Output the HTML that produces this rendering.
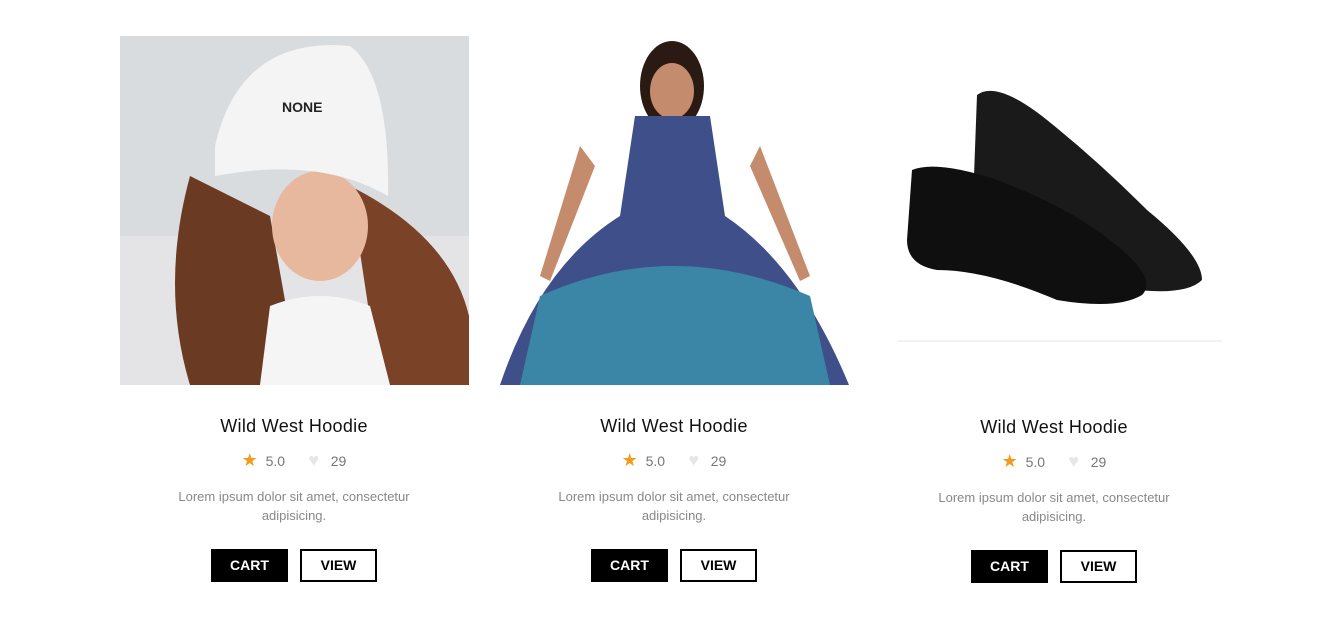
<!DOCTYPE html>
<html><head><style>
body{margin:0;width:1344px;height:621px;background:#fff;font-family:"Liberation Sans",sans-serif;position:relative;overflow:hidden}
.card{position:absolute;width:380px;text-align:center}
.t{position:absolute;top:0;left:0;width:100%;font-size:18px;color:#111;letter-spacing:.3px}
.r{position:absolute;top:34px;left:0;width:100%;font-size:14px;color:#777}
.d{position:absolute;top:71px;left:0;width:100%;font-size:13px;line-height:19px;color:#888}
.b{position:absolute;top:133px;width:77px;height:33px;box-sizing:border-box;font-size:14px;font-weight:bold;line-height:31px}
.c{left:107px;background:#000;color:#fff;border:1px solid #000}
.v{left:196px;border:2px solid #000;color:#000;line-height:29px}
</style></head><body>
<svg style="position:absolute;left:120px;top:36px" width="349" height="349">
<rect width="349" height="349" fill="#d9dcdf"/>
<rect x="0" y="200" width="349" height="149" fill="#e4e4e6"/>
<path d="M70 140 Q40 250 70 349 L180 349 L150 180 Z" fill="#6b3a22"/>
<path d="M230 150 Q330 200 349 280 L349 349 L260 349 Z" fill="#7a4328"/>
<ellipse cx="200" cy="190" rx="48" ry="55" fill="#e7b79e"/>
<path d="M150 270 Q200 250 250 270 L270 349 L140 349 Z" fill="#f5f5f5"/>
<path d="M95 110 Q120 0 230 10 Q270 40 268 160 Q200 120 95 140 Z" fill="#f4f4f4"/>
<text x="162" y="76" font-size="14" font-weight="bold" fill="#222">NONE</text>
</svg>
<svg style="position:absolute;left:500px;top:36px" width="349" height="349">
<rect width="349" height="349" fill="#fff"/>
<ellipse cx="172" cy="50" rx="32" ry="45" fill="#2b1a14"/>
<ellipse cx="172" cy="55" rx="22" ry="28" fill="#c48b6c"/>
<path d="M80 110 L40 240 L50 245 L95 130 Z M260 110 L310 240 L300 245 L250 130 Z" fill="#c48b6c"/>
<path d="M135 80 L210 80 L225 180 Q300 230 349 349 L0 349 Q40 230 120 180 Z" fill="#3e4f8a"/>
<path d="M40 260 Q172 200 310 260 L330 349 L20 349 Z" fill="#3b86a6"/>
</svg>
<svg style="position:absolute;left:897px;top:80px" width="325" height="262">
<path d="M80 15 Q100 0 150 40 Q200 80 250 130 Q305 175 305 200 Q290 215 240 210 L170 200 Q100 200 75 150 Z" fill="#1a1a1a"/>
<path d="M15 90 Q40 80 100 100 Q180 130 225 170 Q260 200 245 215 Q220 230 160 220 Q90 190 40 190 Q10 185 10 160 Z" fill="#0f0f0f"/>
<rect x="0" y="260" width="325" height="2" fill="#f2f2f2"/>
</svg>
<div class="card" style="left:104px;top:416px"><div class="t">Wild West Hoodie</div><div class="r"><span style="color:#f39a1b;font-size:18px">★</span>&nbsp;&nbsp;5.0&nbsp;&nbsp;&nbsp;&nbsp;&nbsp;&nbsp;<span style="color:#e4e6e8;font-size:18px">♥</span>&nbsp;&nbsp;&nbsp;29</div><div class="d">Lorem ipsum dolor sit amet, consectetur<br>adipisicing.</div><div class="b c">CART</div><div class="b v">VIEW</div></div>
<div class="card" style="left:484px;top:416px"><div class="t">Wild West Hoodie</div><div class="r"><span style="color:#f39a1b;font-size:18px">★</span>&nbsp;&nbsp;5.0&nbsp;&nbsp;&nbsp;&nbsp;&nbsp;&nbsp;<span style="color:#e4e6e8;font-size:18px">♥</span>&nbsp;&nbsp;&nbsp;29</div><div class="d">Lorem ipsum dolor sit amet, consectetur<br>adipisicing.</div><div class="b c">CART</div><div class="b v">VIEW</div></div>
<div class="card" style="left:864px;top:417px"><div class="t">Wild West Hoodie</div><div class="r"><span style="color:#f39a1b;font-size:18px">★</span>&nbsp;&nbsp;5.0&nbsp;&nbsp;&nbsp;&nbsp;&nbsp;&nbsp;<span style="color:#e4e6e8;font-size:18px">♥</span>&nbsp;&nbsp;&nbsp;29</div><div class="d">Lorem ipsum dolor sit amet, consectetur<br>adipisicing.</div><div class="b c">CART</div><div class="b v">VIEW</div></div>
</body></html>
